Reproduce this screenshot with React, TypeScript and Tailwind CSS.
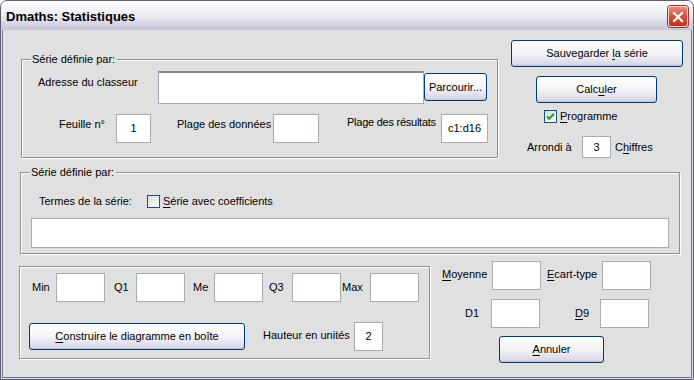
import React from "react";

const F = { fontFamily: '"Liberation Sans", Arial, sans-serif' };

function U({ children }: { children: React.ReactNode }) {
  return <span className="underline underline-offset-[2px]">{children}</span>;
}

function Btn({ w, h, children, className = "" }: { w: string; h: string; children: React.ReactNode; className?: string }) {
  return (
    <div
      className={`${w} ${h} ${className} flex items-center justify-center rounded-[3px] border border-[#003c74] bg-gradient-to-b from-white via-[#f4f4f8] to-[#d5d3e4] text-[11px] text-black shadow-[inset_0_-1px_0_#c7c4da]`}
    >
      {children}
    </div>
  );
}

function Box({ w, h = "h-[29px]", value = "" }: { w: string; h?: string; value?: string }) {
  return (
    <div className={`${w} ${h} shrink-0 flex items-center justify-center border border-[#a5acb5] bg-white text-[11px] text-black`}>
      {value}
    </div>
  );
}

function Frame({ className, children, legend }: { className: string; children: React.ReactNode; legend?: string }) {
  return (
    <div className={`relative border border-[#909090] shadow-[inset_1px_1px_0_#fdfdfd,1px_1px_0_#fdfdfd] ${className}`}>
      {legend && (
        <span className="absolute left-[9px] top-[-8px] bg-[#e0e0e0] pr-[2px] pl-[1px] text-[11px] leading-[14px] text-black">
          {legend}
        </span>
      )}
      {children}
    </div>
  );
}

function Check({ checked }: { checked?: boolean }) {
  return (
    <div className="w-[13px] h-[13px] shrink-0 border border-[#1c5180] bg-gradient-to-br from-[#dcdcd7] to-white flex items-center justify-center">
      {checked && (
        <svg width="9" height="9" viewBox="0 0 9 9">
          <path d="M1 4.5 L3.3 6.8 L8 1.8" fill="none" stroke="#21a121" strokeWidth="2" />
        </svg>
      )}
    </div>
  );
}

export default function App() {
  return (
    <div style={F} className="w-[694px] h-[380px] overflow-hidden bg-white">
      <div className="w-[694px] h-[380px] flex flex-col border border-[#5c5c74] rounded-t-[7px] bg-[#dcdce4] overflow-hidden">
        {/* title bar */}
        <div className="h-[29px] shrink-0 flex items-center justify-between bg-gradient-to-b from-white via-[#ecebf2] to-[#c5c4d6] pl-[5px] pr-[5px]">
          <span className="text-[13px] font-bold text-black leading-none mt-[2px]">Dmaths: Statistiques</span>
          <div className="w-[20px] h-[21px] mt-[2px] rounded-[3px] border border-[#f2d3cc] bg-gradient-to-b from-[#e9887a] via-[#d4503d] to-[#b93322] flex items-center justify-center shadow-[0_0_0_1px_#9e3a2e]">
            <svg width="12" height="12" viewBox="0 0 12 12">
              <path d="M2 2 L10 10 M10 2 L2 10" stroke="white" strokeWidth="2.2" strokeLinecap="square" />
            </svg>
          </div>
        </div>
        {/* body */}
        <div className="flex-1 mx-[1px] mb-[1px] border-x border-b border-[#76768e] bg-[#e0e0e0] flex flex-col text-[11px] text-black">
          {/* top section */}
          <div className="flex items-start mt-[10px]">
            <Frame legend="Série définie par:" className="ml-[18px] mt-[19px] w-[477px] h-[99px] shrink-0">
              <div className="flex items-start mt-[11px]">
                <span className="ml-[16px] w-[120px] mt-[5px] leading-[13px]">Adresse du classeur</span>
                <div className="w-[266px] h-[33px] bg-white border border-[#a5acb5] border-t-[2px] border-t-[#8a8a8a]" />
                <Btn w="w-[63px]" h="h-[28px]" className="mt-[2px]">Parcourir...</Btn>
              </div>
              <div className="flex items-start mt-[10px]">
                <span className="ml-[37px] w-[57px] mt-[4px] leading-[13px]">Feuille n°</span>
                <Box w="w-[35px]" value="1" />
                <span className="ml-[26px] w-[96px] mt-[4px] leading-[13px]">Plage des données</span>
                <Box w="w-[46px]" />
                <span className="ml-[28px] w-[94px] mt-[2px] leading-[13px] tracking-[-0.25px] whitespace-nowrap">Plage des résultats</span>
                <Box w="w-[47px]" value="c1:d16" />
              </div>
            </Frame>
            <div className="ml-[13px] flex flex-col">
              <Btn w="w-[172px]" h="h-[27px]">
                <span>Sauvegarder <U>l</U>a série</span>
              </Btn>
              <Btn w="w-[121px]" h="h-[27px]" className="ml-[25px] mt-[9px]">
                <span>Calc<U>u</U>ler</span>
              </Btn>
              <div className="flex items-center ml-[33px] mt-[7px]">
                <Check checked />
                <span className="ml-[3px] leading-[13px]"><U>P</U>rogramme</span>
              </div>
              <div className="flex items-center ml-[16px] mt-[13px]">
                <span className="w-[55px]">Arrondi à</span>
                <Box w="w-[29px]" h="h-[22px]" value="3" />
                <span className="ml-[4px]">C<U>h</U>iffres</span>
              </div>
            </div>
          </div>
          {/* middle frame */}
          <Frame legend="Série définie par:" className="ml-[17px] mt-[14px] w-[660px] h-[82px] shrink-0">
            <div className="flex items-center mt-[22px] h-[13px]">
              <span className="ml-[18px] w-[108px] leading-[13px]">Termes de la série:</span>
              <Check />
              <span className="ml-[3px] leading-[13px]"><U>S</U>érie avec coefficients</span>
            </div>
            <div className="ml-[10px] mt-[10px] w-[638px] h-[30px] bg-white border border-[#a5acb5]" />
          </Frame>
          {/* bottom */}
          <div className="flex items-start">
            <Frame className="ml-[16px] mt-[12px] w-[411px] h-[93px] shrink-0">
              <div className="flex items-center mt-[6px]">
                <span className="ml-[12px] w-[24px]">Min</span>
                <Box w="w-[49px]" />
                <span className="ml-[9px] w-[22px]">Q1</span>
                <Box w="w-[49px]" />
                <span className="ml-[8px] w-[21px]">Me</span>
                <Box w="w-[49px]" />
                <span className="ml-[6px] w-[23px]">Q3</span>
                <Box w="w-[49px]" />
                <span className="ml-[1px] w-[28px]">Max</span>
                <Box w="w-[49px]" />
              </div>
              <div className="flex items-start mt-[20px]">
                <Btn w="w-[216px]" h="h-[27px]" className="ml-[9px] mt-[1px]">
                  <span><U>C</U>onstruire le diagramme en boîte</span>
                </Btn>
                <span className="ml-[18px] w-[91px] mt-[7px] leading-[13px]">Hauteur en unités</span>
                <Box w="w-[29px]" value="2" />
              </div>
            </Frame>
            <div className="ml-[12px] mt-[7px] flex flex-col">
              <div className="flex items-center">
                <span className="w-[50px] mb-[3px]"><U>M</U>oyenne</span>
                <Box w="w-[49px]" />
                <span className="ml-[6px] w-[55px] mb-[3px]"><U>E</U>cart-type</span>
                <Box w="w-[49px]" />
              </div>
              <div className="flex items-center mt-[9px]">
                <span className="ml-[23px] w-[26px]">D1</span>
                <Box w="w-[49px]" />
                <span className="ml-[35px] w-[25px]"><U>D</U>9</span>
                <Box w="w-[49px]" />
              </div>
              <Btn w="w-[105px]" h="h-[27px]" className="ml-[57px] mt-[8px]">
                <span><U>A</U>nnuler</span>
              </Btn>
            </div>
          </div>
        </div>
      </div>
    </div>
  );
}
